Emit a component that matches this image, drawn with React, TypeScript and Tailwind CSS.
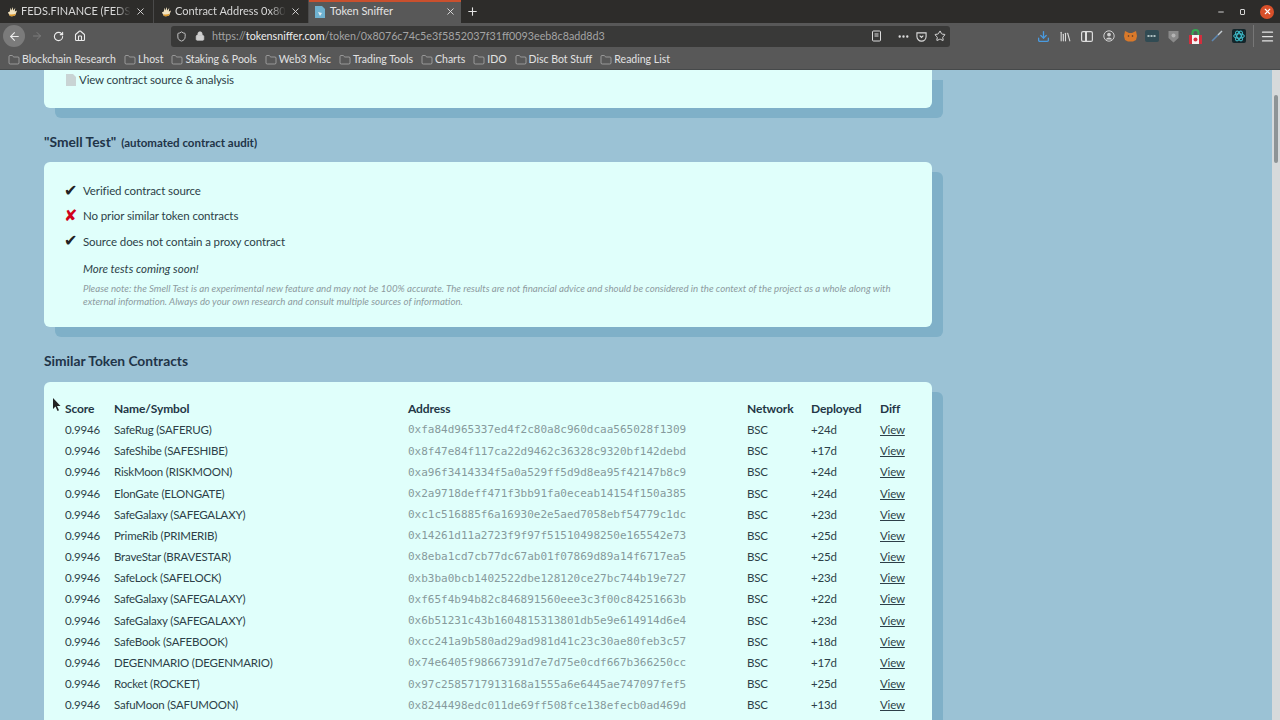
import React from "react";
import { ArrowLeft, ArrowRight, RotateCw, Home, Shield, Lock, X, Plus, Minus, Star, MoreHorizontal, Folder, Library, Menu, Download } from "lucide-react";

const rows: [string, string, string][] = [
  ["SafeRug (SAFERUG)", "0xfa84d965337ed4f2c80a8c960dcaa565028f1309", "+24d"],
  ["SafeShibe (SAFESHIBE)", "0x8f47e84f117ca22d9462c36328c9320bf142debd", "+17d"],
  ["RiskMoon (RISKMOON)", "0xa96f3414334f5a0a529ff5d9d8ea95f42147b8c9", "+24d"],
  ["ElonGate (ELONGATE)", "0x2a9718deff471f3bb91fa0eceab14154f150a385", "+24d"],
  ["SafeGalaxy (SAFEGALAXY)", "0xc1c516885f6a16930e2e5aed7058ebf54779c1dc", "+23d"],
  ["PrimeRib (PRIMERIB)", "0x14261d11a2723f9f97f51510498250e165542e73", "+25d"],
  ["BraveStar (BRAVESTAR)", "0x8eba1cd7cb77dc67ab01f07869d89a14f6717ea5", "+25d"],
  ["SafeLock (SAFELOCK)", "0xb3ba0bcb1402522dbe128120ce27bc744b19e727", "+23d"],
  ["SafeGalaxy (SAFEGALAXY)", "0xf65f4b94b82c846891560eee3c3f00c84251663b", "+22d"],
  ["SafeGalaxy (SAFEGALAXY)", "0x6b51231c43b1604815313801db5e9e614914d6e4", "+23d"],
  ["SafeBook (SAFEBOOK)", "0xcc241a9b580ad29ad981d41c23c30ae80feb3c57", "+18d"],
  ["DEGENMARIO (DEGENMARIO)", "0x74e6405f98667391d7e7d75e0cdf667b366250cc", "+17d"],
  ["Rocket (ROCKET)", "0x97c2585717913168a1555a6e6445ae747097fef5", "+25d"],
  ["SafuMoon (SAFUMOON)", "0x8244498edc011de69ff508fce138efecb0ad469d", "+13d"],
];

const bookmarks = ["Blockchain Research", "Lhost", "Staking & Pools", "Web3 Misc", "Trading Tools", "Charts", "IDO", "Disc Bot Stuff", "Reading List"];

function Fav() {
  return (
    <svg width="11" height="11" viewBox="0 0 12 12" className="shrink-0">
      <path d="M1 7 L3 6 L4 2 L5 5 L6 1 L7 5 L9 2 L8.500 6 L11 5 L9 10 Q6 12 3 10.500 Z" fill="#f2e3c0" />
      <path d="M3 10.500 Q6 12 9 10 L9.500 8.500 Q6 10 2.500 9 Z" fill="#d9962b" />
    </svg>
  );
}

function Tab({ title, w, fav }: { title: string; w: string; fav: React.ReactNode }) {
  return (
    <div className={`${w} h-full flex items-center pl-[7px] pr-[7px] gap-[3px] border-r border-[#4a4a4a] shrink-0`}>
      {fav}
      <span className="flex-1 min-w-0 overflow-hidden whitespace-nowrap text-[11px] text-[#d8d8d8] [mask-image:linear-gradient(to_left,transparent,black_16px)]">{title}</span>
      <X size={11} className="text-[#dcdcdc] ml-[1px] shrink-0" strokeWidth={2} />
    </div>
  );
}

function Cell({ children, c = "" }: { children?: React.ReactNode; c?: string }) {
  return <div className={`whitespace-nowrap ${c}`}>{children}</div>;
}

function Ext({ children }: { children: React.ReactNode }) {
  return <div className="w-[14px] h-[14px] flex items-center justify-center shrink-0">{children}</div>;
}

export default function App() {
  return (
    <div className="w-[1280px] h-[720px] overflow-hidden flex flex-col bg-[#9bc2d5] font-['Lato',sans-serif] relative">
      {/* tabs */}
      <div className="h-[23px] bg-[#2d2c2a] flex items-center shrink-0">
        <Tab title="FEDS.FINANCE (FEDS) Token" w="w-[154px]" fav={<Fav />} />
        <Tab title="Contract Address 0x8076c74c" w="w-[155px]" fav={<Fav />} />
        <div className="w-[152px] h-full bg-[#585858] border-t-2 border-[#c9502e] flex items-center pl-[5px] pr-[5px] pb-[2px] gap-[4px] shrink-0">
          <svg width="12" height="12" viewBox="0 0 12 12" className="shrink-0"><path d="M1 0h7l3 3v9H1z" fill="#6fb2d0" /><path d="M4 6l4 1-2 3z" fill="#e4eef2" /></svg>
          <span className="flex-1 text-[11px] text-[#e4e4e4]">Token Sniffer</span>
          <X size={11} className="text-[#e0e0e0]" strokeWidth={2} />
        </div>
        <Plus size={13} className="text-[#e4e4e4] ml-[5px]" strokeWidth={2} />
        <div className="ml-auto flex items-center gap-[15px] pr-[6px]">
          <Minus size={8} className="text-[#cfcfcf]" strokeWidth={3} />
          <div className="w-[5px] h-[6px] border border-[#d5d5d5] rounded-[1px]" />
          <div className="w-[14px] h-[14px] rounded-full bg-[#d9502a] flex items-center justify-center"><X size={9} className="text-white" strokeWidth={3} /></div>
        </div>
      </div>
      {/* nav */}
      <div className="h-[26px] bg-[#585858] flex items-center pl-[3px] pr-[5px] shrink-0">
        <div className="w-[22px] h-[22px] rounded-full bg-[#7b7b7b] flex items-center justify-center"><ArrowLeft size={13} className="text-[#ececec]" /></div>
        <ArrowRight size={12} className="text-[#7d7d7d] ml-[6px]" />
        <RotateCw size={11} className="text-[#ececec] ml-[10px]" strokeWidth={2.4} />
        <Home size={12} className="text-[#ececec] ml-[10px]" strokeWidth={2.2} />
        <div className="w-[779px] h-[21px] ml-[85px] bg-[#393938] rounded-[3px] flex items-center pl-[5px] pr-[4px] shrink-0">
          <Shield size={11} className="text-[#cfcfcf]" />
          <Lock size={10} className="text-[#cfcfcf] ml-[8px]" fill="#cfcfcf" />
          <span className="ml-[7px] text-[10.75px] text-[#a4a4a4] whitespace-nowrap">https://<span className="text-[#eeeeee]">tokensniffer.com</span>/token/0x8076c74c5e3f5852037f31ff0093eeb8c8add8d3</span>
          <div className="ml-auto flex items-center">
            <svg width="9" height="12" viewBox="0 0 9 12" fill="none" stroke="#dcdcdc" strokeWidth="1"><rect x="0.5" y="1" width="8" height="10" rx="1" /><path d="M2.500 4h4M2.500 6h4" /></svg>
            <MoreHorizontal size={13} className="text-[#dcdcdc] ml-[16px]" strokeWidth={2.4} />
            <svg width="11" height="11" viewBox="0 0 12 12" fill="none" stroke="#dcdcdc" strokeWidth="1.2" className="ml-[6px]"><path d="M1 2h10v4a5 5 0 0 1-10 0z" /><path d="M4 5l2 2 2-2" /></svg>
            <Star size={12} className="text-[#dcdcdc] ml-[7px]" />
          </div>
        </div>
        <div className="ml-auto flex items-center gap-[7.7px]">
          <Ext><Download size={13} className="text-[#4a9be0]" strokeWidth={2.4} /></Ext>
          <Ext><Library size={13} className="text-[#dcdcdc]" /></Ext>
          <Ext><svg width="12" height="11" viewBox="0 0 12 11" fill="none" stroke="#dcdcdc" strokeWidth="1.2"><rect x="0.6" y="0.6" width="10.800" height="9.800" rx="1.500" /><path d="M5 1v9" strokeWidth="2" /></svg></Ext>
          <Ext><svg width="12" height="12" viewBox="0 0 12 12"><circle cx="6" cy="6" r="5.200" fill="none" stroke="#cfcfcf" /><circle cx="6" cy="4.600" r="1.900" fill="#cfcfcf" /><path d="M2.800 9.500a3.400 3 0 0 1 6.400 0z" fill="#cfcfcf" /></svg></Ext>
          <Ext><svg width="13" height="12" viewBox="0 0 13 12"><path d="M1 1l4 2h3l4-2 1 5-1 4-3 1.500H4L1 10 0 6z" fill="#d9792a" /><circle cx="4.500" cy="6" r="0.800" fill="#4a3525" /><circle cx="8.500" cy="6" r="0.800" fill="#4a3525" /></svg></Ext>
          <Ext><svg width="14" height="12" viewBox="0 0 14 12"><rect width="14" height="12" rx="2" fill="#314b53" /><path d="M2.500 6h9" stroke="#d8e6e6" strokeWidth="1.600" strokeDasharray="2 1" /></svg></Ext>
          <Ext><svg width="11" height="13" viewBox="0 0 11 13"><path d="M0.500 1h10v7l-5 4.500-5-4.500z" fill="#8a8a8a" /><circle cx="5.500" cy="5.500" r="2" fill="#b4b4b4" /></svg></Ext>
          <Ext><svg width="13" height="15" viewBox="0 0 13 15" className="shrink-0"><path d="M3.500 6V4a3 3 0 0 1 6 0v2" fill="none" stroke="#33a852" strokeWidth="2" /><rect y="6" width="13" height="9" rx="1" fill="#f4f4f4" /><rect y="6" width="3" height="9" fill="#d32f3d" /><rect x="10" y="6" width="3" height="9" fill="#d32f3d" /><circle cx="6.500" cy="10.500" r="2" fill="#d32f3d" /></svg></Ext>
          <Ext><svg width="12" height="12" viewBox="0 0 12 12"><path d="M1 11l6-6" stroke="#5d88b3" strokeWidth="1.600" /><path d="M7 5l4-4" stroke="#c4ccd2" strokeWidth="1.400" /></svg></Ext>
          <Ext><svg width="14" height="14" viewBox="0 0 14 14" fill="none" stroke="#3fc0cf" strokeWidth="1"><rect width="14" height="14" rx="2" fill="#14262b" stroke="none" /><ellipse cx="7" cy="7" rx="5.400" ry="2.200" /><ellipse cx="7" cy="7" rx="5.400" ry="2.200" transform="rotate(60 7 7)" /><ellipse cx="7" cy="7" rx="5.400" ry="2.200" transform="rotate(120 7 7)" /></svg></Ext>
          <div className="w-px h-[22px] bg-[#777]" />
          <Menu size={15} className="text-[#e4e4e4] -ml-[2px]" strokeWidth={2} />
        </div>
      </div>
      {/* bookmarks */}
      <div className="h-[21px] bg-[#585858] flex items-center pl-[8px] pt-[1px] gap-[8px] border-b border-[#46494a] shrink-0">
        {bookmarks.map((b) => (
          <div key={b} className="flex items-center gap-[2px] text-[10.5px] text-[#e2e2e2] whitespace-nowrap">
            <Folder size={12} className="text-[#bdbdbd]" strokeWidth={1.3} />
            <span>{b}</span>
          </div>
        ))}
      </div>
      {/* page */}
      <div className="flex-1 flex overflow-hidden">
        <div className="flex-1 pl-[44px]">
          <div className="w-[888px] h-[38px] bg-[#e0fffb] rounded-b-[6px] shadow-[11px_10px_0_#7fb0c8] pl-[22px] pt-[1px] flex items-start">
            <svg width="10" height="12" viewBox="0 0 10 12" className="mt-[3px]"><path d="M0 0h7l3 3v9H0z" fill="#c9d4d4" /></svg>
            <span className="ml-[3px] text-[11.5px] tracking-[-0.15px] leading-[18px] text-[#2d3f48]">View contract source &amp; analysis</span>
          </div>
          <div className="mt-[23.500px] h-[20px] flex items-baseline gap-[5px] text-[#1f3448] font-bold">
            <span className="text-[13.8px]">"Smell Test"</span>
            <span className="text-[11.5px]">(automated contract audit)</span>
          </div>
          <div className="mt-[10.500px] w-[888px] h-[165px] bg-[#e0fffb] rounded-[6px] shadow-[11px_10px_0_#7fb0c8] pl-[21px] pt-[16px]">
            {[["Verified contract source", true], ["No prior similar token contracts", false], ["Source does not contain a proxy contract", true]].map(([t, ok]) => (
              <div key={t as string} className="flex items-center h-[25.4px] text-[11.5px] tracking-[-0.1px] text-[#2d3f48]">
                <span className={`w-[18px] -ml-[1px] mr-[1px] text-[16px] font-['DejaVu_Sans',sans-serif] leading-none ${ok ? "text-[#222]" : "text-[#d0021b]"}`}>{ok ? "✔" : "✘"}</span>
                <span>{t as string}</span>
              </div>
            ))}
            <div className="ml-[18px] mt-[6px] text-[11.5px] italic leading-[18px] text-[#2d3f48]">More tests coming soon!</div>
            <div className="ml-[18px] mt-[3.500px] w-[820px] text-[9.7px] italic leading-[13px] text-[#8d9b9f]">
              Please note: the Smell Test is an experimental new feature and may not be 100% accurate. The results are not financial advice and should be considered in the context of the project as a whole along with external information. Always do your own research and consult multiple sources of information.
            </div>
          </div>
          <div className="mt-[25px] h-[18px] text-[13.8px] leading-[18px] font-bold text-[#1f3448]">Similar Token Contracts</div>
          <div className="mt-[12px] w-[888px] h-[400px] bg-[#e0fffb] rounded-[6px] shadow-[11px_10px_0_#7fb0c8] pl-[21px] pt-[16px] text-[11.5px] tracking-[-0.2px] text-[#2d3f48]">
            <div className="grid grid-cols-[49px_294px_339px_64px_69px_52px] items-center h-[21px] text-[12px] tracking-[-0.1px] font-bold text-[#243746]">
              <Cell>Score</Cell><Cell>Name/Symbol</Cell><Cell>Address</Cell><Cell>Network</Cell><Cell>Deployed</Cell><Cell>Diff</Cell>
            </div>
            {rows.map((r, i) => (
              <div key={i} className="grid grid-cols-[49px_294px_339px_64px_69px_52px] items-center h-[21.2px]">
                <Cell>0.9946</Cell>
                <Cell>{r[0]}</Cell>
                <Cell c="font-['DejaVu_Sans_Mono',monospace] text-[11px] tracking-normal text-[#869a9c] pt-[2px]">{r[1]}</Cell>
                <Cell>BSC</Cell>
                <Cell>{r[2]}</Cell>
                <Cell c="underline">View</Cell>
              </div>
            ))}
          </div>
        </div>
        <div className="w-[8px] bg-[#d6dadb] flex flex-col shrink-0">
          <div className="h-[25px]" />
          <div className="h-[68px] w-[4px] ml-[2px] rounded-[2px] bg-[#8d9496]" />
        </div>
      </div>
      <svg width="10" height="14" viewBox="0 0 10 14" className="absolute left-[52px] top-[398px]"><path d="M1 0v11l2.500-2.500L5.500 13l1.500-.8-2-4.200h3.500z" fill="#222" /></svg>
    </div>
  );
}
